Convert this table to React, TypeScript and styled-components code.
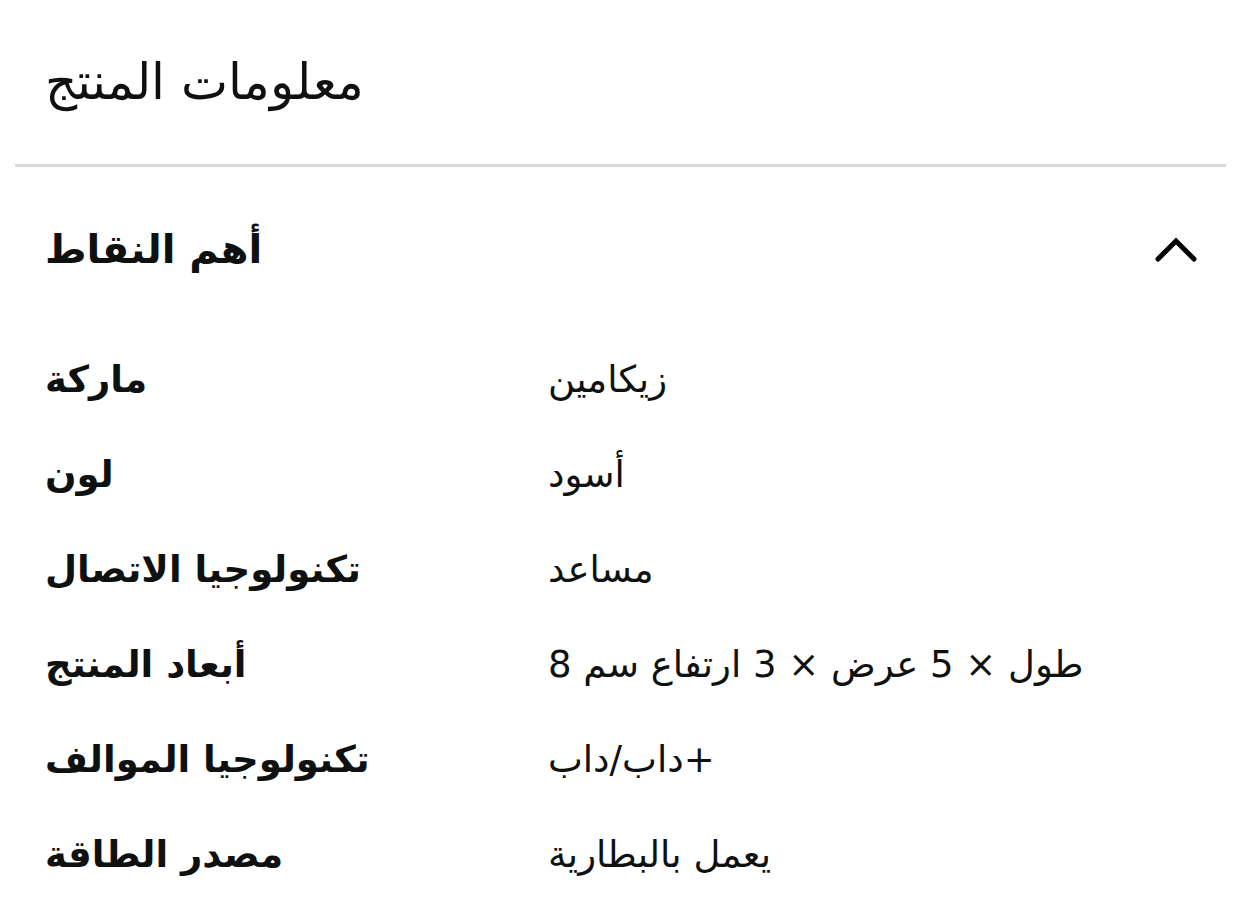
import React from 'react';
import styled, { createGlobalStyle } from 'styled-components';

const GlobalStyle = createGlobalStyle`
  html, body {
    margin: 0;
    padding: 0;
    background: #ffffff;
  }
  body {
    font-family: "DejaVu Sans", sans-serif;
    color: #0f1111;
  }
`;

const Page = styled.div`
  width: 1241px;
  padding: 0 15px;
  box-sizing: border-box;
`;

const TitleBar = styled.header`
  height: 164px;
  display: flex;
  align-items: center;
  padding: 0 30px;
`;

const Title = styled.h1`
  margin: 0;
  font-family: "DejaVu Serif", serif;
  font-size: 50px;
  font-weight: 400;
  line-height: 1;
`;

const Divider = styled.hr`
  margin: 0;
  border: none;
  height: 3px;
  background: #d8dada;
`;

const SectionHeader = styled.div`
  display: flex;
  align-items: center;
  justify-content: space-between;
  padding: 52px 26px 0 30px;
  height: 60px;
`;

const SectionTitle = styled.h2`
  margin: 0;
  font-size: 40px;
  font-weight: 700;
  line-height: 1;
`;

const Toggle = styled.button`
  border: none;
  background: none;
  padding: 0;
  width: 48px;
  height: 48px;
  display: flex;
  align-items: center;
  justify-content: center;
  cursor: pointer;
`;

const SpecList = styled.dl`
  margin: 0;
  padding: 53px 30px 0;
`;

const SpecRow = styled.div`
  display: grid;
  grid-template-columns: 503px 1fr;
  align-items: center;
  height: 95px;
`;

const SpecLabel = styled.dt`
  font-size: 37px;
  font-weight: 700;
`;

const SpecValue = styled.dd`
  margin: 0;
  font-size: 37px;
  font-weight: 400;
`;

const specs = [
  { label: 'ماركة', value: 'زيكامين' },
  { label: 'لون', value: 'أسود' },
  { label: 'تكنولوجيا الاتصال', value: 'مساعد' },
  { label: 'أبعاد المنتج', value: 'طول × 5 عرض × 3 ارتفاع سم 8' },
  { label: 'تكنولوجيا الموالف', value: 'داب/داب+' },
  { label: 'مصدر الطاقة', value: 'يعمل بالبطارية' },
];

const ChevronUp = () => (
  <svg width="44" height="28" viewBox="0 0 44 28" fill="none">
    <polyline
      points="4,24 22,6 40,24"
      stroke="#000"
      strokeWidth="5"
      strokeLinecap="round"
      strokeLinejoin="miter"
    />
  </svg>
);

const App: React.FC = () => (
  <>
    <GlobalStyle />
    <Page>
      <TitleBar>
        <Title>معلومات المنتج</Title>
      </TitleBar>
      <Divider />
      <SectionHeader>
        <SectionTitle>أهم النقاط</SectionTitle>
        <Toggle aria-label="طي">
          <ChevronUp />
        </Toggle>
      </SectionHeader>
      <SpecList>
        {specs.map((s) => (
          <SpecRow key={s.label}>
            <SpecLabel>{s.label}</SpecLabel>
            <SpecValue>{s.value}</SpecValue>
          </SpecRow>
        ))}
      </SpecList>
    </Page>
  </>
);

export default App;
